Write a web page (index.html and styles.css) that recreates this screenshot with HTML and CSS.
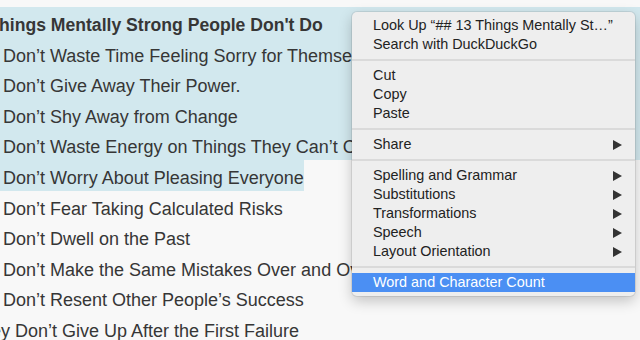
FILE: index.html
```html
<!DOCTYPE html>
<html>
<head>
	<title>13 Things Mentally Strong People Don't Do</title>
	<link rel="stylesheet" href="styles.css">
</head>
<body>
	<div class="doc">
		<div class="selected">
			<div class="row heading"><span class="pre">## 13 T</span>hings Mentally Strong People Don't Do</div>
			<div class="row"><span class="pre">1. They </span>Don’t Waste Time Feeling Sorry for Themselves</div>
			<div class="row"><span class="pre">2. They </span>Don’t Give Away Their Power.</div>
			<div class="row"><span class="pre">3. They </span>Don’t Shy Away from Change</div>
			<div class="row"><span class="pre">4. They </span>Don’t Waste Energy on Things They Can’t Control</div>
		</div>
		<div class="row"><span class="pre sel">5. They </span><span class="sel">Don’t Worry About Pleasing Everyone</span></div>
		<div class="row"><span class="pre">6. They </span>Don’t Fear Taking Calculated Risks</div>
		<div class="row"><span class="pre">7. They </span>Don’t Dwell on the Past</div>
		<div class="row"><span class="pre">8. They </span>Don’t Make the Same Mistakes Over and Over</div>
		<div class="row"><span class="pre">9. They </span>Don’t Resent Other People’s Success</div>
		<div class="row"><span class="pre wide">10. They </span>Don’t Give Up After the First Failure</div>
	</div>

	<div class="menu">
		<div class="item">Look Up “## 13 Things Mentally St…”</div>
		<div class="item">Search with DuckDuckGo</div>
		<div class="sep"></div>
		<div class="item">Cut</div>
		<div class="item">Copy</div>
		<div class="item">Paste</div>
		<div class="sep"></div>
		<div class="item sub">Share</div>
		<div class="sep"></div>
		<div class="item sub">Spelling and Grammar</div>
		<div class="item sub">Substitutions</div>
		<div class="item sub">Transformations</div>
		<div class="item sub">Speech</div>
		<div class="item sub">Layout Orientation</div>
		<div class="sep"></div>
		<div class="item active">Word and Character Count</div>
	</div>
</body>
</html>
```

FILE: styles.css
```css
html, body {
	margin: 0;
	height: 100%;
	overflow: hidden;
}
body {
	background-color: #f8f8f8;
	font-family: "Liberation Sans", Arial, sans-serif;
	color: #363636;
	position: relative;
}
.doc {
	padding-top: 7px;
	margin-left: -100px;
}
.selected {
	background-color: #d2e8ee;
}
.row {
	display: flex;
	box-sizing: border-box;
	height: 30.6px;
	padding-top: 6px;
	line-height: 24.6px;
	font-size: 18px;
	white-space: nowrap;
}
.pre {
	flex: none;
	width: 103px;
	text-align: right;
	white-space: pre;
	overflow: hidden;
}
.pre.wide {
	width: 115px;
}
.heading {
	font-weight: bold;
	font-size: 17.6px;
}
.heading .pre {
	width: 99px;
}
.sel {
	background-color: #d2e8ee;
	margin-top: -6px;
	padding-top: 6px;
}

/* context menu */
.menu {
	position: absolute;
	left: 352px;
	top: 12px;
	width: 283px;
	padding: 4px 0;
	background-color: #eeeeee;
	border-radius: 5px;
	box-shadow: 0 0 0 1px rgba(0,0,0,0.08), 0 5px 14px rgba(0,0,0,0.22);
	font-family: "Liberation Sans", Arial, sans-serif;
	font-size: 14.4px;
	color: #222;
}
.item {
	position: relative;
	height: 19px;
	line-height: 19px;
	padding-left: 21px;
	white-space: nowrap;
}
.item.sub::after {
	content: "";
	position: absolute;
	right: 13px;
	top: 5px;
	border-left: 9px solid #333;
	border-top: 5px solid transparent;
	border-bottom: 5px solid transparent;
}
.item.active {
	background-color: #4b8ff3;
	color: #fff;
}
.sep {
	height: 2px;
	margin: 5px 0;
	background-color: #dadada;
}
```
